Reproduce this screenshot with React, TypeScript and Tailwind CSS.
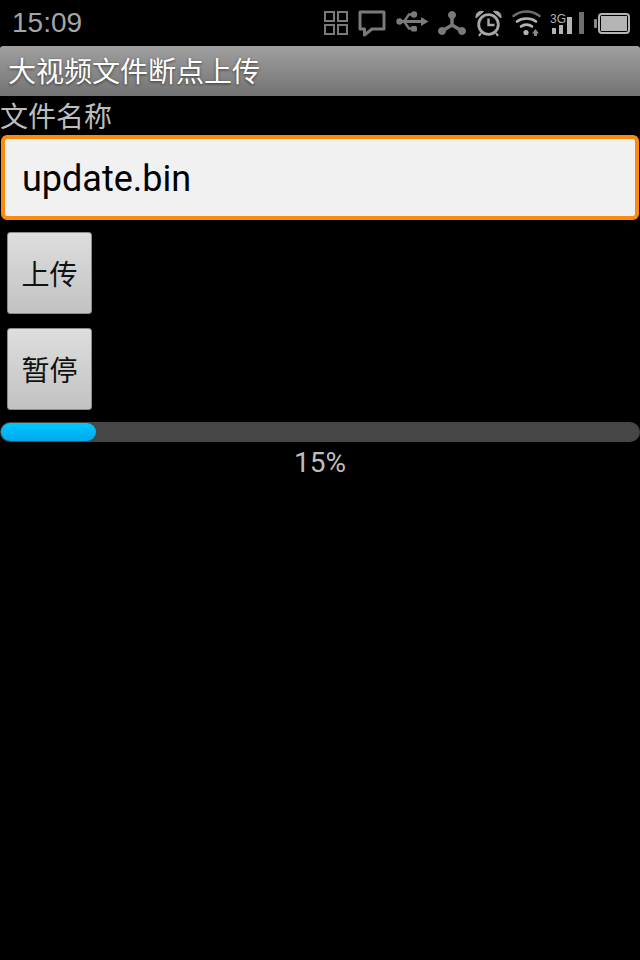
import React from "react";

const cjk = "font-['Noto_Sans_CJK_SC',sans-serif]";

const StatusIcons: React.FC = () => (
  <div className="flex items-center ml-auto text-[#7a7a7a]">
    {/* grid */}
    <svg width="24" height="24" viewBox="0 0 24 24" fill="none" stroke="currentColor" strokeWidth="2">
      <rect x="1" y="1" width="9" height="9" />
      <rect x="14" y="1" width="9" height="9" />
      <rect x="1" y="14" width="9" height="9" />
      <rect x="14" y="14" width="9" height="9" />
    </svg>
    {/* chat */}
    <svg width="28" height="27" viewBox="0 0 28 27" className="ml-[10px]" fill="none" stroke="currentColor" strokeWidth="3" strokeLinejoin="round">
      <path d="M2 2H26V19H14L6.500 25V19H2Z" />
    </svg>
    {/* usb */}
    <svg width="33" height="24" viewBox="0 0 33 24" className="ml-[10px]" fill="currentColor">
      <circle cx="3.500" cy="10.500" r="3.200" />
      <path d="M3 9H25V6L32.500 10.500L25 15V12H3Z" />
      <circle cx="18" cy="3.500" r="3.200" />
      <rect x="15" y="15" width="6" height="5.500" rx="1.500" />
      <path d="M8 10.500L13 3.500H18M8 10.500L13 17.500H18" fill="none" stroke="currentColor" strokeWidth="2.400" />
    </svg>
    {/* tripod */}
    <svg width="28" height="25" viewBox="0 0 28 25" className="ml-[9px]" fill="currentColor" stroke="currentColor">
      <circle cx="14" cy="4" r="3.500" />
      <circle cx="4" cy="20" r="3.500" />
      <circle cx="24" cy="20" r="3.500" />
      <path d="M14 4V14L4 20M14 14L24 20" strokeWidth="3.400" fill="none" />
    </svg>
    {/* alarm */}
    <svg width="27" height="27" viewBox="0 0 27 27" className="ml-[9px] text-[#a8a8a8]" fill="none" stroke="currentColor">
      <circle cx="13.500" cy="14.500" r="9.800" strokeWidth="2.800" />
      <path d="M13.500 8.500V15H19.500" strokeWidth="2.400" />
      <path d="M1 8C0.500 3 4 0.500 8.500 1.500ZM26 8C26.500 3 23 0.500 18.500 1.500Z" fill="currentColor" strokeWidth="1" />
      <path d="M6 23L4 26M21 23L23 26" strokeWidth="2.200" />
    </svg>
    {/* wifi */}
    <svg width="29" height="27" viewBox="0 0 29 27" className="ml-[10px]" fill="none" strokeLinecap="round">
      <path d="M1.500 6C9 0 20 0 27.500 6" stroke="#6e6e6e" strokeWidth="2.400" />
      <path d="M5 11.500C10 7.500 19 7.500 24 11.500" stroke="#b4b4b4" strokeWidth="2.600" />
      <path d="M9 16.500C12 14 17 14 20 16.500" stroke="#b4b4b4" strokeWidth="2.600" />
      <circle cx="14" cy="22.500" r="2.600" fill="#b4b4b4" />
      <path d="M23.500 19L27 23.500H25V26H22V23.500H20Z" fill="#8a8a8a" />
    </svg>
    {/* signal */}
    <svg width="35" height="26" viewBox="0 -2 35 26" className="ml-[9px]">
      <text x="0" y="11" fontSize="13" textLength="16" lengthAdjust="spacingAndGlyphs" fill="#b4b4b4" fontFamily="'Liberation Sans', sans-serif">3G</text>
      <rect x="2" y="16" width="4" height="6" fill="#b4b4b4" />
      <rect x="9" y="13" width="4" height="9" fill="#b4b4b4" />
      <rect x="17" y="5" width="5" height="17" fill="#b4b4b4" />
      <rect x="29" y="0" width="5" height="22" fill="#6e6e6e" />
    </svg>
    {/* battery */}
    <svg width="36" height="21" viewBox="0 0 36 21" className="ml-[9px] mr-[10px]">
      <rect x="0" y="6" width="3" height="9" rx="1" fill="#8a8a8a" />
      <rect x="5" y="1" width="30" height="19" rx="3" fill="none" stroke="#b4b4b4" strokeWidth="2" />
      <rect x="7" y="3" width="26" height="15" fill="#b4b4b4" />
    </svg>
  </div>
);

const PushButton: React.FC<{ label: string }> = ({ label }) => (
  <button className="w-[85px] h-[82px] ml-[7px] rounded-[3px] border border-[#8c8c8c] bg-gradient-to-b from-[#dedede] to-[#c2c2c2] text-[28px] leading-none text-[#111] flex items-center justify-center">
    {label}
  </button>
);

export default function App() {
  return (
    <div className={`w-[640px] h-[960px] bg-black overflow-hidden ${cjk}`}>
      {/* Status bar */}
      <div className="h-[46px] flex items-center">
        <span className="ml-[12px] text-[28px] leading-none font-['Liberation_Sans',sans-serif] text-[#a6a6a6]">15:09</span>
        <StatusIcons />
      </div>

      {/* Title bar */}
      <div className="h-[50px] rounded-t-[3px] bg-gradient-to-b from-[#a0a0a0] to-[#737373] flex items-center pl-[8px] pb-[2px] text-[28px] leading-none text-white [text-shadow:0_1px_3px_rgba(0,0,0,0.6)]">
        大视频文件断点上传
      </div>

      {/* Form */}
      <div className="h-[39px] flex items-center pb-[2px] text-[28px] leading-none text-[#bdbdbd]">文件名称</div>
      <div className="h-[85px] mx-[1px] rounded-[6px] border-[4px] border-[#fb8a0e] bg-[#f1f1f1] flex items-center pl-[17px] pt-[3px] text-[36px] leading-none text-black font-['Roboto',sans-serif]">
        update.bin
      </div>

      <div className="mt-[12px] flex flex-col gap-[14px]">
        <PushButton label="上传" />
        <PushButton label="暂停" />
      </div>

      {/* Progress */}
      <div className="mt-[12px] h-[20px] rounded-full bg-[#464646] overflow-hidden p-[1px]">
        <div className="h-full w-[95px] rounded-full bg-gradient-to-b from-[#00c8ff] to-[#00a8ec]" />
      </div>
      <div className="mt-[6px] text-center text-[28px] leading-[30px] text-[#bdbdbd] font-['Roboto',sans-serif]">15%</div>
    </div>
  );
}
